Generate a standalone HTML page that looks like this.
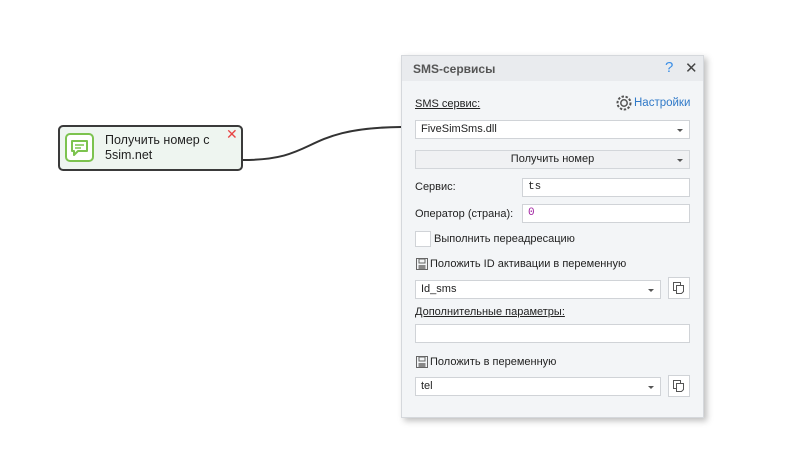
<!DOCTYPE html><html><head><style>
body{margin:0;width:810px;height:472px;background:#fff;position:relative;overflow:hidden;font-family:"Liberation Sans","DejaVu Sans",sans-serif;font-size:11px;color:#222}
.a{position:absolute}
.panel{left:401px;top:55px;width:303px;height:363px;background:#f3f5f7;border:1px solid #d5d8dc;box-sizing:border-box;box-shadow:3px 3px 6px rgba(0,0,0,.25)}
.hdr{left:0;top:0;width:301px;height:25px;background:#e9ebee}
.inp{background:#fff;border:1px solid #d0d3d7;box-sizing:border-box;height:19px;line-height:17px;padding-left:5px}
.arr{position:absolute;right:6px;top:8px;width:0;height:0;border-left:3px solid transparent;border-right:3px solid transparent;border-top:3px solid #555}
.btn{background:#f0f1f3;border:1px solid #d3d6da;box-sizing:border-box}
</style></head><body>
<svg class="a" style="left:0;top:0" width="810" height="472"><path d="M243 160 C 320 160, 300 128, 401 127" stroke="#333" stroke-width="2" fill="none"/></svg>
<div class="a" style="left:58px;top:125px;width:185px;height:46px;border:2px solid #3a3a3a;border-radius:5px;background:#eef5f0;box-sizing:border-box"></div>
<svg class="a" style="left:64px;top:132px" width="32" height="32"><rect x="2" y="2" width="27" height="27" rx="4" fill="#fff" stroke="#7cc34f" stroke-width="2"/><path d="M8 9h15v10h-9l-4 4v-4h-2z" fill="none" stroke="#7cc34f" stroke-width="2" stroke-linejoin="round"/><path d="M11 13h9M11 16h6" stroke="#7cc34f" stroke-width="1.6"/></svg>
<div class="a" style="left:105px;top:133px;font-size:12.5px;line-height:15px;color:#222">Получить номер с<br>5sim.net</div>
<div class="a" style="left:226px;top:126px;color:#e84545;font-size:14px;font-weight:bold">✕</div>
<div class="a panel">
<div class="a hdr"></div>
<div class="a" style="left:11px;top:6px;font-weight:bold;color:#555;font-size:12px">SMS-сервисы</div>
<div class="a" style="left:263px;top:3px;color:#3a8ee6;font-size:15px">?</div>
<div class="a" style="left:283px;top:3px;color:#444;font-size:15px">✕</div>
<div class="a" style="left:13px;top:42px;text-decoration:underline">SMS сервис:</div>
<svg class="a" style="left:213px;top:38px" width="18" height="18"><circle cx="9" cy="9" r="3.2" fill="none" stroke="#555" stroke-width="1.5"/><circle cx="9" cy="9" r="6.5" fill="none" stroke="#555" stroke-width="2" stroke-dasharray="2.4 1.6"/></svg>
<div class="a" style="left:232px;top:41px;color:#2f79c8;font-size:11.5px">Настройки</div>
<div class="a inp" style="left:13px;top:64px;width:275px">FiveSimSms.dll<span class="arr"></span></div>
<div class="a btn" style="left:13px;top:94px;width:275px;height:19px;text-align:center;line-height:17px">Получить номер<span class="arr"></span></div>
<div class="a" style="left:13px;top:125px">Сервис:</div>
<div class="a inp" style="left:120px;top:122px;width:168px;font-family:'Liberation Mono',monospace">ts</div>
<div class="a" style="left:13px;top:152px">Оператор (страна):</div>
<div class="a inp" style="left:120px;top:148px;width:168px;font-family:'Liberation Mono',monospace;color:#a020a0">0</div>
<div class="a" style="left:13px;top:175px;width:16px;height:16px;background:#fff;border:1px solid #d0d3d7;box-sizing:border-box"></div>
<div class="a" style="left:32px;top:177px">Выполнить переадресацию</div>
<svg class="a" style="left:14px;top:202px" width="12" height="12"><rect x=".5" y=".5" width="11" height="11" fill="none" stroke="#666"/><rect x="3" y="1" width="6" height="4" fill="none" stroke="#666"/><rect x="2.5" y="7" width="7" height="4" fill="#888"/></svg>
<div class="a" style="left:28px;top:202px">Положить ID активации в переменную</div>
<div class="a inp" style="left:13px;top:224px;width:246px">Id_sms<span class="arr"></span></div>
<div class="a" style="left:266px;top:221px;width:22px;height:22px;background:#fff;border:1px solid #d0d3d7;box-sizing:border-box"></div>
<svg class="a" style="left:270px;top:225px" width="14" height="14"><rect x="1.5" y="1.5" width="7" height="8" fill="#fff" stroke="#555"/><path d="M4.5 4.5h7v6l-2 2h-5z" fill="#fff" stroke="#555"/></svg>
<div class="a" style="left:13px;top:250px;text-decoration:underline">Дополнительные параметры:</div>
<div class="a inp" style="left:13px;top:268px;width:275px"></div>
<svg class="a" style="left:14px;top:300px" width="12" height="12"><rect x=".5" y=".5" width="11" height="11" fill="none" stroke="#666"/><rect x="3" y="1" width="6" height="4" fill="none" stroke="#666"/><rect x="2.5" y="7" width="7" height="4" fill="#888"/></svg>
<div class="a" style="left:28px;top:300px">Положить в переменную</div>
<div class="a inp" style="left:13px;top:321px;width:246px">tel<span class="arr"></span></div>
<div class="a" style="left:266px;top:319px;width:22px;height:22px;background:#fff;border:1px solid #d0d3d7;box-sizing:border-box"></div>
<svg class="a" style="left:270px;top:323px" width="14" height="14"><rect x="1.5" y="1.5" width="7" height="8" fill="#fff" stroke="#555"/><path d="M4.5 4.5h7v6l-2 2h-5z" fill="#fff" stroke="#555"/></svg>
</div>
</body></html>
